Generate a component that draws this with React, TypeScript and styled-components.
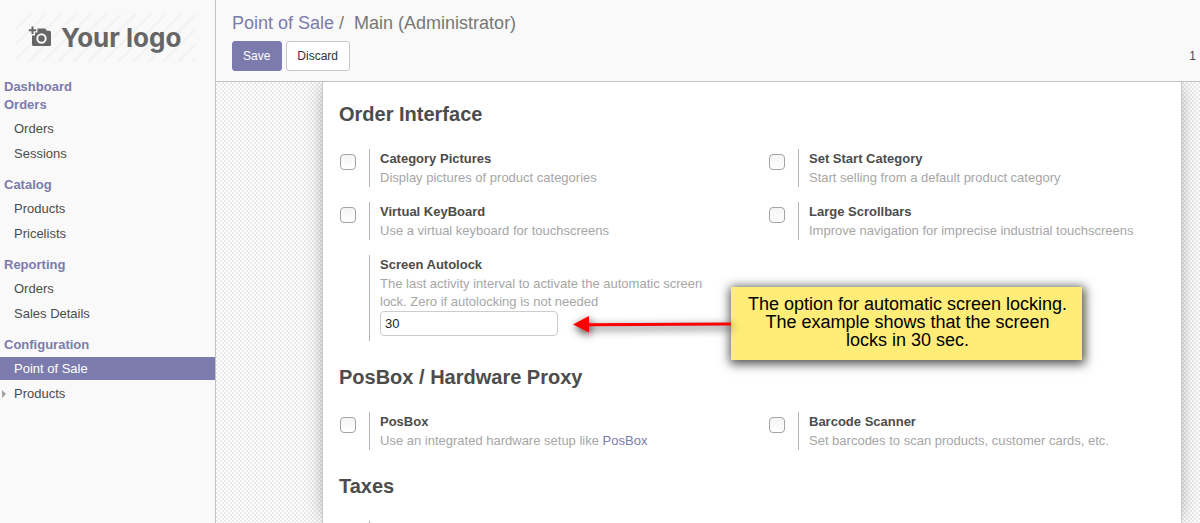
import React from "react";
import styled, { createGlobalStyle } from "styled-components";

const purple = "#7c7bad";

const GlobalStyle = createGlobalStyle`
  *, *::before, *::after { box-sizing: border-box; }
  html, body, #root { height: 100%; }
  body {
    margin: 0;
    overflow: hidden;
    background: #f9f9f9;
    color: #4c4c4c;
    font: 13px/18px "Liberation Sans", Arial, sans-serif;
  }
  a { color: ${purple}; text-decoration: none; }
`;

const Page = styled.div`
  display: flex;
  height: 100vh;
`;

const Sidebar = styled.aside`
  flex: 0 0 216px;
  border-right: 1px solid #c2c2c2;
  background: #f9f9f9;
`;

const LogoLink = styled.a`
  display: block;
  height: 48px;
  margin: 14px 19px 0 16px;
`;

const MenuGroup = styled.section`
  padding-bottom: 9px;
`;

const Menu = styled.nav`
  padding-top: 16px;
`;

const GroupTitle = styled.a`
  display: block;
  padding-left: 4px;
  font-weight: bold;
`;

const MenuList = styled.ul`
  margin: 3px 0 0;
  padding: 0;
  list-style: none;
`;

const MenuItem = styled.li`
  padding-bottom: 2px;
`;

const MenuLink = styled.a<{ $active?: boolean; $more?: boolean }>`
  position: relative;
  display: block;
  padding: 3px 14px 2px;
  background: ${(p) => (p.$active ? purple : "transparent")};
  color: ${(p) => (p.$active ? "#fff" : "#4c4c4c")};

  &::before {
    content: "";
    display: ${(p) => (p.$more ? "block" : "none")};
    position: absolute;
    left: 2px;
    top: 8px;
    border: solid transparent;
    border-width: 4px 0 4px 4px;
    border-left-color: #a0a0a0;
  }
`;

const Main = styled.main`
  flex: 1;
  min-width: 0;
  display: flex;
  flex-direction: column;
`;

const ControlPanel = styled.header`
  padding: 11px 4px 10px 16px;
  border-bottom: 1px solid #c2c2c2;
  background: #f9f9f9;
`;

const Breadcrumb = styled.h1`
  margin: 0 0 6px;
  font-size: 18px;
  line-height: 24px;
  font-weight: normal;
  color: #777;
  white-space: pre;
`;

const Toolbar = styled.div`
  display: flex;
  align-items: center;
  gap: 4px;
`;

const Button = styled.button<{ $primary?: boolean }>`
  height: 30px;
  padding: 0 11px 0 10px;
  border: 1px solid ${(p) => (p.$primary ? purple : "#c8c8c8")};
  border-radius: 3px;
  background: ${(p) => (p.$primary ? purple : "#fff")};
  color: ${(p) => (p.$primary ? "#fff" : "#333")};
  font: 12px/18px "Liberation Sans", Arial, sans-serif;
`;

const Pager = styled.span`
  margin-left: auto;
  font-size: 12px;
`;

const Canvas = styled.div`
  position: relative;
  flex: 1;
  min-height: 0;
  overflow: hidden;
  display: flex;
  padding: 0 18px 0 106px;
  background: repeating-conic-gradient(#ebebeb 0 25%, #fff 0 50%) 0 0 / 4px 4px;
`;

const Sheet = styled.form`
  flex: 1;
  min-width: 0;
  padding: 20px 0;
  border: solid #c8c8d3;
  border-width: 0 1px;
  background: #fff;
  box-shadow: 0 0 20px -4px rgba(0, 0, 0, 0.4);
`;

const Heading = styled.h2`
  margin: 0 16px 23px;
  font-size: 20px;
  line-height: 24px;
`;

const Settings = styled.div`
  display: grid;
  grid-template-columns: 1fr 1fr;
  row-gap: 15px;
  margin-bottom: 24px;
`;

const Setting = styled.div`
  display: grid;
  grid-template-columns: 30px 1fr;
  padding: 0 16px;
`;

const Checkbox = styled.input`
  appearance: none;
  width: 16px;
  height: 16px;
  margin: 5px 0 0 1px;
  border: 1px solid #a3a3a3;
  border-radius: 4px;
  background: linear-gradient(#f4f4f4, #fff);
`;

const SettingBody = styled.div`
  grid-column: 2;
  min-height: 38px;
  padding-left: 10px;
  border-left: 1px solid #b4b4b4;
`;

const SettingTitle = styled.label`
  display: block;
  padding-bottom: 1px;
  line-height: 19px;
  font-weight: bold;
`;

const Description = styled.p`
  margin: 0;
  max-width: 344px;
  color: #a6a6a6;
`;

const NumberInput = styled.input`
  display: block;
  width: 178px;
  height: 25px;
  margin: 0 0 5px;
  padding: 0 4px;
  border: 1px solid #ccc;
  border-radius: 4px;
  background: #fff;
  color: #1f1f1f;
  font: 13px/18px "Liberation Sans", Arial, sans-serif;
`;

const Callout = styled.aside`
  position: absolute;
  left: 357px;
  top: 205px;
  display: flex;
  align-items: center;
`;

const Arrow = styled.svg`
  display: block;
  overflow: visible;
  filter: drop-shadow(1px 3px 4px rgba(0, 0, 0, 0.8));
`;

const Note = styled.p`
  width: 351px;
  height: 73px;
  margin: 0;
  padding: 8px 13px 8px 15px;
  background: #ffed78;
  box-shadow: 1px 2px 10px 2px rgba(0, 0, 0, 0.7);
  color: #000;
  font-size: 18px;
  line-height: 18px;
  text-align: center;
`;

function Logo() {
  return (
    <svg width="180" height="48" viewBox="0 0 180 48" role="img" aria-label="Your logo">
      <defs>
        <pattern id="stripes" width="15" height="15" patternUnits="userSpaceOnUse">
          <path d="M-2 17 17 -2M-2 2 2 -2M13 17 17 13" stroke="#f2f2f2" strokeWidth="2" />
        </pattern>
      </defs>
      <rect width="180" height="48" fill="url(#stripes)" />
      <g fill="#666">
        <path d="M15.500 12.500h2v2.700h2.700v2h-2.700v2.700h-2v-2.700h-2.700v-2h2.700z" />
        <path
          fillRule="evenodd"
          d="M21.500 14.500h7.500l2 2.300h2.500a1.500 1.500 0 0 1 1.500 1.500V30.500a1.500 1.500 0 0 1-1.500 1.500h-16A1.500 1.500 0 0 1 16 30.500v-9h3v-3h2.500zM25.500 19.300a5.200 5.200 0 1 0 0 10.400 5.200 5.200 0 0 0 0-10.400zm0 2a3.200 3.200 0 1 1 0 6.400 3.200 3.200 0 0 1 0-6.400z"
        />
        <text x="45" y="33" fontFamily="Inter, sans-serif" fontSize="26" fontWeight="bold">
          Your logo
        </text>
      </g>
    </svg>
  );
}

type Item = { label: string; active?: boolean; more?: boolean };

const groups: { title: string; items: Item[] }[] = [
  { title: "Orders", items: [{ label: "Orders" }, { label: "Sessions" }] },
  { title: "Catalog", items: [{ label: "Products" }, { label: "Pricelists" }] },
  { title: "Reporting", items: [{ label: "Orders" }, { label: "Sales Details" }] },
  {
    title: "Configuration",
    items: [
      { label: "Point of Sale", active: true },
      { label: "Products", more: true },
    ],
  },
];

function Option({ id, title, children }: { id: string; title: string; children: React.ReactNode }) {
  return (
    <Setting>
      <Checkbox type="checkbox" id={id} />
      <SettingBody>
        <SettingTitle htmlFor={id}>{title}</SettingTitle>
        <Description>{children}</Description>
      </SettingBody>
    </Setting>
  );
}

export default function App() {
  return (
    <Page>
      <GlobalStyle />
      <Sidebar>
        <LogoLink href="#">
          <Logo />
        </LogoLink>
        <Menu>
          <GroupTitle href="#">Dashboard</GroupTitle>
          {groups.map((group) => (
            <MenuGroup key={group.title}>
              <GroupTitle href="#">{group.title}</GroupTitle>
              <MenuList>
                {group.items.map((item) => (
                  <MenuItem key={item.label}>
                    <MenuLink href="#" $active={item.active} $more={item.more}>
                      {item.label}
                    </MenuLink>
                  </MenuItem>
                ))}
              </MenuList>
            </MenuGroup>
          ))}
        </Menu>
      </Sidebar>
      <Main>
        <ControlPanel>
          <Breadcrumb>
            <a href="#">Point of Sale</a>
            {" /  Main (Administrator)"}
          </Breadcrumb>
          <Toolbar>
            <Button $primary>Save</Button>
            <Button>Discard</Button>
            <Pager>1</Pager>
          </Toolbar>
        </ControlPanel>
        <Canvas>
          <Sheet>
            <Heading>Order Interface</Heading>
            <Settings>
              <Option id="pictures" title="Category Pictures">
                Display pictures of product categories
              </Option>
              <Option id="start" title="Set Start Category">
                Start selling from a default product category
              </Option>
              <Option id="keyboard" title="Virtual KeyBoard">
                Use a virtual keyboard for touchscreens
              </Option>
              <Option id="scrollbars" title="Large Scrollbars">
                Improve navigation for imprecise industrial touchscreens
              </Option>
              <Setting>
                <SettingBody>
                  <SettingTitle htmlFor="autolock">Screen Autolock</SettingTitle>
                  <Description>
                    The last activity interval to activate the automatic screen lock. Zero if
                    autolocking is not needed
                  </Description>
                  <NumberInput id="autolock" type="text" defaultValue="30" />
                </SettingBody>
              </Setting>
            </Settings>
            <Heading>PosBox / Hardware Proxy</Heading>
            <Settings>
              <Option id="posbox" title="PosBox">
                Use an integrated hardware setup like <a href="#">PosBox</a>
              </Option>
              <Option id="scanner" title="Barcode Scanner">
                Set barcodes to scan products, customer cards, etc.
              </Option>
            </Settings>
            <Heading>Taxes</Heading>
            <Settings>
              <Setting>
                <SettingBody />
              </Setting>
            </Settings>
          </Sheet>
          <Callout>
            <Arrow width="158" height="16" viewBox="0 0 158 16" aria-hidden="true">
              <path d="M0 8.500 16 0v16.500zM15 7.200 158 6.500v3L15 10.200z" fill="#f00" />
            </Arrow>
            <Note>
              The option for automatic screen locking. The example shows that the screen locks in 30
              sec.
            </Note>
          </Callout>
        </Canvas>
      </Main>
    </Page>
  );
}
